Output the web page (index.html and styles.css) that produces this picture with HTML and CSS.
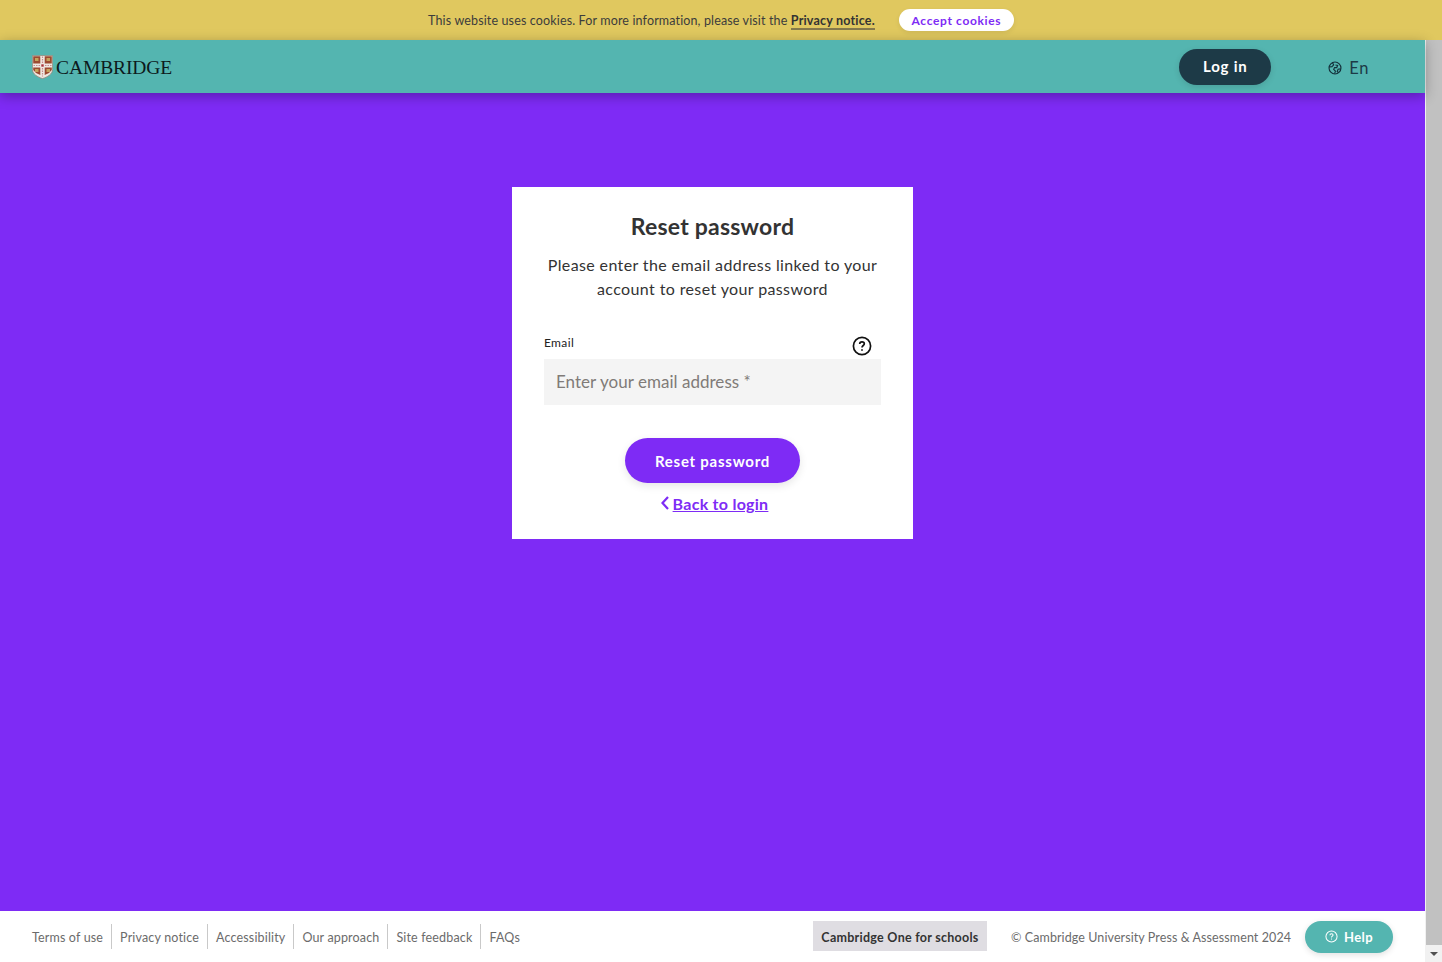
FILE: index.html
```html
<!DOCTYPE html>
<html lang="en">
<head>
<meta charset="utf-8">
<title>Reset password</title>
<link rel="stylesheet" href="styles.css">
</head>
<body>
<div class="cookie-bar">
  <p class="cookie-text">This website uses cookies. For more information, please visit the <a class="cookie-link" href="#">Privacy notice.</a></p>
  <button class="cookie-btn">Accept cookies</button>
</div>
<div class="shell">
  <div class="page">
    <header class="header">
      <a class="brand" href="#">
        <svg class="crest" viewBox="0 0 21 24" width="21" height="24">
          <path d="M0.400 0.400H20.600V14.500C20.600 19 15.500 22 10.500 23.600C5.500 22 0.400 19 0.400 14.500Z" fill="#efe8e2" stroke="#8f8576" stroke-width="0.800"/>
          <path d="M1.200 1.200H8.300V8.400H1.200ZM12.700 1.200H19.800V8.400H12.700ZM1.200 12.600H8.300V20L4 18L1.200 15ZM12.700 12.600H19.800V15L17 18L12.700 20Z" fill="#9d4a30"/>
          <path d="M3 3h3.500v3H3ZM14.500 3h3.500v3h-3.500ZM3 14h3.500v3H3ZM14.500 14h3.500v3h-3.500Z" fill="#c6a25c"/>
          <path d="M9.300 9.300H11.700V11.700H9.300Z" fill="#a8333a"/>
          <path d="M10.500 1.500V8M10.500 13V21.500M1.500 10.500H8M13 10.500H19.500" stroke="#c88a8a" stroke-width="1.200" stroke-dasharray="1.500 1"/>
        </svg>
        <span class="brand-name">CAMBRIDGE</span>
      </a>
      <div class="header-actions">
        <button class="login-btn">Log in</button>
        <div class="lang">
          <svg class="globe" viewBox="0 0 16 16" width="14" height="14" fill="none" stroke="#14303b" stroke-width="1.300">
            <circle cx="8" cy="8" r="6.800"/>
            <path d="M5 1.800L6.500 4.500L4.500 6.500L1.500 6.800M8.500 4.500L11 5L10 7.500L7.500 7.500L6.500 9.500L8.500 11.500L7.500 14.500M14.500 9L11.500 9.500L10.500 12L12 13.200"/>
          </svg>
          <span>En</span>
        </div>
      </div>
    </header>
    <main class="main">
      <section class="card">
        <h1 class="card-title">Reset password</h1>
        <p class="card-intro">Please enter the email address linked to your account to reset your password</p>
        <div class="field-head">
          <label class="field-label" for="email">Email</label>
          <svg class="help-icon" viewBox="0 0 20 20" width="20" height="20" fill="none" stroke="#111" stroke-width="1.700">
            <circle cx="10" cy="10" r="8.600"/>
            <path d="M7.700 8C7.700 6.600 8.800 5.800 10 5.800C11.300 5.800 12.300 6.600 12.300 7.800C12.300 9.500 10 9.500 10 11.500"/>
            <path d="M10 13.300V14.800"/>
          </svg>
        </div>
        <input class="field-input" id="email" type="text" placeholder="Enter your email address *">
        <button class="reset-btn">Reset password</button>
        <a class="back-link" href="#">
          <svg class="chevron" viewBox="0 0 8 14" width="8" height="14" fill="none" stroke="#7e2bf5" stroke-width="2.200"><path d="M7 1L1.500 7L7 13"/></svg>
          <span class="back-text">Back to login</span>
        </a>
      </section>
    </main>
    <footer class="footer">
      <nav class="footer-links">
        <a href="#">Terms of use</a>
        <a href="#">Privacy notice</a>
        <a href="#">Accessibility</a>
        <a href="#">Our approach</a>
        <a href="#">Site feedback</a>
        <a href="#">FAQs</a>
      </nav>
      <div class="footer-right">
        <span class="school-tag">Cambridge One for schools</span>
        <span class="copyright">© Cambridge University Press &amp; Assessment 2024</span>
        <button class="help-btn">
          <svg viewBox="0 0 14 14" width="13" height="13" fill="none" stroke="#fff" stroke-width="1.100">
            <circle cx="7" cy="7" r="6"/>
            <path d="M5.300 5.600C5.300 4.600 6.100 4 7 4C8 4 8.700 4.600 8.700 5.400C8.700 6.600 7 6.600 7 8"/>
            <path d="M7 9.200V10.300"/>
          </svg>
          <span>Help</span>
        </button>
      </div>
    </footer>
  </div>
  <div class="scrollbar">
    <div class="scroll-thumb"></div>
    <div class="scroll-arrow"></div>
  </div>
</div>
</body>
</html>
```
FILE: styles.css
```css
* { box-sizing: border-box; }
html, body { height: 100%; margin: 0; overflow: hidden; }
body {
  display: flex;
  flex-direction: column;
  font-family: Lato, "Open Sans", sans-serif;
  color: #333;
  background: #7e2bf5;
}
.cookie-bar {
  height: 40px;
  flex: none;
  background: #e0c85f;
  display: flex;
  align-items: center;
  justify-content: center;
  gap: 24px;
}
.cookie-text { margin: 0; font-size: 12.500px; color: #3c3c3c; letter-spacing: .14px; }
.cookie-link { color: #333; font-weight: 700; text-decoration: none; border-bottom: 2px solid #85794b; letter-spacing: .2px; }
.cookie-btn {
  height: 22px;
  width: 115px;
  border: 0;
  border-radius: 11px;
  background: #fff;
  color: #7e2bf5;
  font: 700 12px Lato, sans-serif;
  letter-spacing: .65px;
  box-shadow: 0 2px 5px rgba(0,0,0,.08);
  padding-bottom: 1px;
}
.shell { flex: 1; display: flex; min-height: 0; }
.page { flex: 1; display: flex; flex-direction: column; min-width: 0; }
.header {
  height: 53px;
  flex: none;
  background: #54b5b0;
  display: flex;
  align-items: center;
  justify-content: space-between;
  padding: 0 56px 0 32px;
  box-shadow: 0 3px 12px rgba(0,0,0,.3);
  position: relative;
}
.brand { display: flex; align-items: center; gap: 3px; text-decoration: none; }
.crest { display: block; }
.brand-name { font: 400 19.500px "Liberation Serif", serif; color: #0d1a1c; letter-spacing: -.1px; padding-top: 2px; }
.header-actions { display: flex; align-items: center; gap: 57px; }
.login-btn {
  width: 92px;
  height: 36px;
  border: 0;
  border-radius: 18px;
  background: #1d3a47;
  color: #fff;
  font: 700 15px Lato, sans-serif;
  letter-spacing: .8px;
  box-shadow: 0 2px 6px rgba(0,0,0,.12);
  padding-bottom: 2px;
}
.lang { display: flex; align-items: center; gap: 7px; font-size: 16.500px; letter-spacing: .6px; color: #1d3a47; padding-top: 2px; }
.globe { display: block; }
.main { flex: 1; display: flex; justify-content: center; align-items: flex-start; padding-top: 94px; min-height: 0; }
.card {
  width: 401px;
  height: 352px;
  background: #fff;
  padding: 26px 32px 0;
  display: flex;
  flex-direction: column;
  align-items: center;
}
.card-title { margin: 0; font-size: 23px; line-height: 26px; font-weight: 700; color: #333; letter-spacing: .2px; }
.card-intro { margin: 14px 0 0; font-size: 16px; line-height: 24px; text-align: center; color: #333; letter-spacing: .38px; }
.field-head { align-self: stretch; display: flex; justify-content: space-between; margin-top: 32px; height: 26px; padding-right: 9px; }
.field-label { font-size: 12px; line-height: 18px; color: #222; letter-spacing: .35px; padding-top: 1px; }
.help-icon { display: block; margin-top: 3px; }
.field-input {
  align-self: stretch;
  height: 46px;
  flex: none;
  border: 0;
  background: #f4f4f4;
  padding: 0 12px 1px;
  font: 400 17px Lato, sans-serif;
  letter-spacing: .03px;
}
.field-input::placeholder { color: #807b78; opacity: 1; }
.reset-btn {
  width: 175px;
  height: 45px;
  flex: none;
  margin-top: 33px;
  border: 0;
  border-radius: 23px;
  background: #7e2bf5;
  color: #fff;
  font: 700 15px Lato, sans-serif;
  letter-spacing: .75px;
  box-shadow: 0 3px 8px rgba(0,0,0,.1);
  padding-bottom: 1px;
}
.back-link { display: flex; align-items: center; gap: 4px; margin: 10px 0 0 4px; color: #7e2bf5; text-decoration: none; height: 20px; }
.chevron { display: block; }
.back-text { font-size: 16px; font-weight: 700; text-decoration: underline; letter-spacing: .27px; }
.footer {
  height: 51px;
  flex: none;
  background: #fff;
  display: flex;
  align-items: center;
  justify-content: space-between;
  padding: 0 32px;
  font-size: 12.500px;
  color: #6b6b6b;
}
.footer-links { display: flex; align-items: center; }
.footer-links a {
  color: #6b6b6b;
  text-decoration: none;
  padding: 2px 8px 0;
  line-height: 23px;
  border-left: 1px solid #c9c9c9;
  letter-spacing: .16px;
}
.footer-links a:first-child { padding-left: 0; border-left: 0; }
.footer-right { display: flex; align-items: center; }
.school-tag {
  width: 174px;
  height: 30px;
  line-height: 30px;
  padding-top: 2px;
  margin-bottom: 1px;
  text-align: center;
  background: #dfdde2;
  color: #333;
  font-weight: 700;
  letter-spacing: .27px;
}
.copyright { margin-left: 24px; letter-spacing: .09px; width: 280px; white-space: nowrap; padding-top: 1px; }
.help-btn {
  width: 88px;
  height: 32px;
  margin-left: 14px;
  border: 0;
  border-radius: 16px;
  background: #54b5b0;
  color: #fff;
  font: 700 13px Lato, sans-serif;
  letter-spacing: .4px;
  display: flex;
  align-items: center;
  justify-content: center;
  gap: 6px;
  box-shadow: 0 2px 6px rgba(0,0,0,.12);
}
.scrollbar {
  width: 17px;
  flex: none;
  background: #f1f1f1;
  display: flex;
  flex-direction: column;
}
.scroll-thumb { flex: 1; background: #c1c1c1; margin-left: 1px; }
.scroll-arrow { height: 17px; flex: none; display: flex; align-items: center; justify-content: center; }
.scroll-arrow::after {
  content: "";
  border-left: 4px solid transparent;
  border-right: 4px solid transparent;
  border-top: 4px solid #505050;
}
```
